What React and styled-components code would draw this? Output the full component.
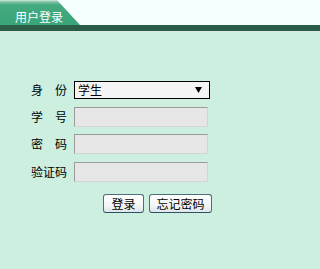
import React from 'react';
import styled, { createGlobalStyle } from 'styled-components';

const GlobalStyle = createGlobalStyle`
  html, body {
    margin: 0;
    padding: 0;
    background: #ccefe0;
    font-family: "Noto Sans CJK SC", "DejaVu Sans", sans-serif;
    font-size: 12px;
  }
`;

const Page = styled.div`
  min-height: 269px;
  background: #ccefe0;
`;

// tab strip on top
const Header = styled.div`
  display: flex;
  height: 25px;
  background: #f5fffd;
`;

const Tab = styled.div`
  width: 80px;
  height: 25px;
  background: linear-gradient(#d3e8dd 0, #7cc3a2 2px, #45aa80 5px, #3aa479 100%);
  clip-path: polygon(0 0, 57px 0, 80px 100%, 0 100%);
  color: #ffffff;
  font-size: 12px;
  line-height: 12px;
  padding: 11px 0 0 15px;
  box-sizing: border-box;
  white-space: nowrap;
`;

const Bar = styled.div`
  height: 6px;
  background: #2a5e48;
  border-bottom: 1px solid #d7ebe2;
`;

const Form = styled.div`
  display: grid;
  grid-template-columns: 36px 136px;
  column-gap: 7px;
  align-items: center;
  padding: 49px 0 0 31px;
`;

const Label = styled.div`
  width: 36px;
  color: #000;
  text-align: justify;
  text-align-last: justify;
  line-height: 12px;
`;

const Row = styled.div`
  margin-top: ${p => p.$gap}px;
  height: ${p => p.$h}px;
  display: flex;
  align-items: center;
`;

const SelectBox = styled.div`
  width: 136px;
  height: 18px;
  box-sizing: border-box;
  border: 1px solid #000;
  background: #f4f4f4;
  display: flex;
  align-items: center;
  justify-content: space-between;
  padding: 0 7px 0 3px;
  line-height: 12px;
`;

const Input = styled.input`
  width: 134px;
  height: 20px;
  box-sizing: border-box;
  margin: 0;
  border: 1px solid;
  border-color: #9b9b9b #d4d4d4 #d4d4d4 #9b9b9b;
  background: #e6e6e6;
  outline: none;
`;

const Buttons = styled.div`
  display: flex;
  gap: 5px;
  padding: 12px 0 0 103px;
`;

const Button = styled.button`
  height: 19px;
  padding: 0 5px;
  margin: 0;
  box-sizing: border-box;
  border: 1px solid #4c6f7c;
  border-bottom-color: #2f5160;
  border-radius: 3px;
  background: linear-gradient(#ffffff, #f3f6f7 60%, #dde6e9);
  font-family: "Noto Sans CJK SC", "DejaVu Sans", sans-serif;
  font-size: 12px;
  line-height: 12px;
  color: #000;
  width: ${p => p.$w}px;
`;

const rows = [
  { label: '学号', gap: 8, type: 'text' },
  { label: '密码', gap: 7, type: 'password' },
  { label: '验证码', gap: 8, type: 'text' },
];

export default function App() {
  return (
    <Page>
      <GlobalStyle />
      <Header>
        <Tab>用户登录</Tab>
      </Header>
      <Bar />
      <Form>
        <Row $gap={0} $h={18}><Label>身份</Label></Row>
        <Row $gap={0} $h={18}>
          <SelectBox>
            <span>学生</span>
            <svg width="7" height="6" viewBox="0 0 7 6">
              <path d="M0 0H7L3.5 6Z" fill="#000" />
            </svg>
          </SelectBox>
        </Row>
        {rows.map(r => (
          <React.Fragment key={r.label}>
            <Row $gap={r.gap} $h={20}><Label>{r.label}</Label></Row>
            <Row $gap={r.gap} $h={20}><Input type={r.type} /></Row>
          </React.Fragment>
        ))}
      </Form>
      <Buttons>
        <Button $w={41}>登录</Button>
        <Button $w={63}>忘记密码</Button>
      </Buttons>
    </Page>
  );
}
